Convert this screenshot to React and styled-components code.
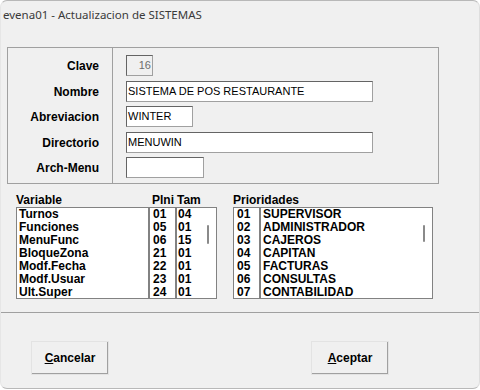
import React from 'react';
import styled, { createGlobalStyle } from 'styled-components';

const Global = createGlobalStyle`
  html, body { margin: 0; padding: 0; background: #ffffff; }
  body { width: 480px; height: 390px; overflow: hidden; }
`;

const Window = styled.div`
  box-sizing: border-box;
  width: 480px;
  height: 389px;
  background: #f0f0f0;
  border: 1px solid #b8b8b8;
  border-left-color: #e6e6e6;
  border-right-color: #dedede;
  border-radius: 7px;
  display: flex;
  flex-direction: column;
  overflow: hidden;
  font-family: "Liberation Sans", Arial, sans-serif;
  color: #000;
`;

const TitleBar = styled.div`
  height: 27px;
  display: flex;
  align-items: center;
  padding-left: 2px;
  font-family: "Noto Sans", "Open Sans", sans-serif;
  font-size: 11.5px;
  color: #3a3a3a;
`;

const Frame = styled.div`
  box-sizing: border-box;
  margin: 19px 0 0 6px;
  width: 432px;
  height: 137px;
  border: 1px solid #a0a0a0;
  display: flex;
`;

const LabelCol = styled.div`
  box-sizing: border-box;
  width: 105px;
  border-right: 1px solid #a0a0a0;
  padding: 7px 13px 0 0;
  display: flex;
  flex-direction: column;
  align-items: flex-end;
  gap: 4.5px;
`;

const FieldCol = styled.div`
  padding: 7px 0 0 13px;
  display: flex;
  flex-direction: column;
  gap: 4.5px;
`;

const Label = styled.div`
  height: 21px;
  line-height: 22px;
  font-weight: bold;
  font-size: 12px;
`;

const Field = styled.div`
  box-sizing: border-box;
  height: 21px;
  width: ${p => p.$w}px;
  border: 1px solid #a0a0a0;
  border-top-color: #646464;
  border-left-color: #646464;
  background: ${p => (p.$disabled ? '#f0f0f0' : '#ffffff')};
  color: ${p => (p.$disabled ? '#6d6d6d' : '#000')};
  text-align: ${p => (p.$right ? 'right' : 'left')};
  padding: 0 1px;
  font-size: 11px;
  line-height: 19px;
  white-space: nowrap;
  overflow: hidden;
`;

const ListsRow = styled.div`
  margin: 9px 0 0 15px;
  display: flex;
  gap: 16px;
`;

const ListGroup = styled.div`
  display: grid;
  grid-template-columns: ${p => p.$cols};
  grid-template-rows: 14px 92px;
`;

const HeadCell = styled.div`
  font-weight: bold;
  font-size: 12px;
  line-height: 14px;
  padding-left: ${p => p.$indent || 0}px;
  grid-column: ${p => (p.$span ? '1 / -1' : 'auto')};
  white-space: nowrap;
`;

const ListBox = styled.div`
  position: relative;
  box-sizing: border-box;
  height: 92px;
  border: 1px solid #828282;
  background: #ffffff;
  overflow: hidden;
  padding-left: ${p => p.$pad ?? 2}px;
`;

const Item = styled.div`
  height: 13px;
  line-height: 13px;
  font-weight: bold;
  font-size: 12px;
  white-space: nowrap;
`;

const Thumb = styled.div`
  position: absolute;
  top: 17px;
  left: ${p => p.$left}px;
  width: 2px;
  height: ${p => p.$h}px;
  background: #8a8a8a;
  border-radius: 1px;
`;

const Separator = styled.div`
  margin-top: 13px;
  height: 1px;
  background: #a0a0a0;
`;

const ButtonRow = styled.div`
  margin: 28px 0 0 30px;
  display: flex;
  gap: 202px;
`;

const Button = styled.button`
  box-sizing: border-box;
  width: 78px;
  height: 34px;
  background: #f0f0f0;
  border: 1px solid #696969;
  border-top-color: #ffffff;
  border-left-color: #ffffff;
  box-shadow: inset -1px -1px 0 #a0a0a0;
  outline: 1px solid #e3e3e3;
  outline-offset: -1px;
  font-family: "Liberation Sans", Arial, sans-serif;
  font-weight: bold;
  font-size: 12px;
  color: #000;
  padding: 0;
  u { text-decoration: underline; }
`;

const variables = [
  ['Turnos', '01', '04'],
  ['Funciones', '05', '01'],
  ['MenuFunc', '06', '15'],
  ['BloqueZona', '21', '01'],
  ['Modf.Fecha', '22', '01'],
  ['Modf.Usuar', '23', '01'],
  ['Ult.Super', '24', '01'],
];

const prioridades = [
  ['01', 'SUPERVISOR'],
  ['02', 'ADMINISTRADOR'],
  ['03', 'CAJEROS'],
  ['04', 'CAPITAN'],
  ['05', 'FACTURAS'],
  ['06', 'CONSULTAS'],
  ['07', 'CONTABILIDAD'],
];

export default function App() {
  return (
    <>
      <Global />
      <Window>
        <TitleBar>evena01 - Actualizacion de SISTEMAS</TitleBar>
        <Frame>
          <LabelCol>
            <Label>Clave</Label>
            <Label>Nombre</Label>
            <Label>Abreviacion</Label>
            <Label>Directorio</Label>
            <Label>Arch-Menu</Label>
          </LabelCol>
          <FieldCol>
            <Field $w={27} $disabled $right>16</Field>
            <Field $w={247}>SISTEMA DE POS RESTAURANTE</Field>
            <Field $w={67}>WINTER</Field>
            <Field $w={247}>MENUWIN</Field>
            <Field $w={78}></Field>
          </FieldCol>
        </Frame>
        <ListsRow>
          <ListGroup $cols="133px 27px 41px">
            <HeadCell>Variable</HeadCell>
            <HeadCell $indent={3}>Plni</HeadCell>
            <HeadCell $indent={1}>Tam</HeadCell>
            <ListBox>
              {variables.map(v => <Item key={v[0]}>{v[0]}</Item>)}
            </ListBox>
            <ListBox $pad={3}>
              {variables.map(v => <Item key={v[0]}>{v[1]}</Item>)}
            </ListBox>
            <ListBox $pad={1}>
              {variables.map(v => <Item key={v[0]}>{v[2]}</Item>)}
              <Thumb $left={30} $h={19} />
            </ListBox>
          </ListGroup>
          <ListGroup $cols="27px 173px">
            <HeadCell $span>Prioridades</HeadCell>
            <ListBox $pad={3}>
              {prioridades.map(p => <Item key={p[0]}>{p[0]}</Item>)}
            </ListBox>
            <ListBox $pad={2}>
              {prioridades.map(p => <Item key={p[0]}>{p[1]}</Item>)}
              <Thumb $left={162} $h={17} />
            </ListBox>
          </ListGroup>
        </ListsRow>
        <Separator />
        <ButtonRow>
          <Button><u>C</u>ancelar</Button>
          <Button><u>A</u>ceptar</Button>
        </ButtonRow>
      </Window>
    </>
  );
}
